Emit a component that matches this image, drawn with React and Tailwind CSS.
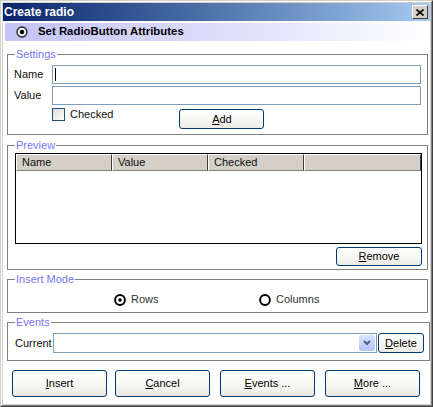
import React from "react";

const Btn = ({ children, className = "" }) => (
  <button
    className={
      "flex items-center justify-center rounded-[3px] border border-[#003c74] bg-linear-to-b from-white via-[#f8f8f5] to-[#ebeae3] text-[11px] text-black " +
      className
    }
  >
    {children}
  </button>
);

const Acc = ({ k, rest }) => (
  <span>
    <span className="underline">{k}</span>
    {rest}
  </span>
);

const Radio = ({ checked }) => (
  <svg width="12" height="12" viewBox="0 0 12 12" className="shrink-0">
    <circle cx="6" cy="6" r="4.9" fill="white" stroke="black" strokeWidth="2" />
    {checked && <circle cx="6" cy="6" r="1.8" fill="black" />}
  </svg>
);

const Group = ({ title, className = "", children }) => (
  <fieldset
    className={
      "ml-[4px] w-[421px] border border-[#808080] pl-[7px] pr-[5px] " + className
    }
  >
    <legend className="px-[1px] text-[11px] leading-[13px] text-[#7878f4]">
      {title}
    </legend>
    {children}
  </fieldset>
);

const App = () => {
  return (
    <div className="h-[407px] w-[433px] overflow-hidden border border-t-[#d4d0c8] border-l-[#d4d0c8] border-r-[#404040] border-b-[#404040] bg-[#d4d0c8] font-['Liberation_Sans',Arial,sans-serif] text-[11px] text-[#111]">
      <div className="flex h-full flex-col border border-t-white border-l-white border-r-[#808080] border-b-[#808080] p-[1px]">
        {/* title bar */}
        <div className="flex h-[18px] shrink-0 items-center justify-between bg-linear-to-r from-[#0a246a] to-[#a6caf0] pl-[1px] pr-[2px]">
          <span className="text-[12px] font-bold text-white">Create radio</span>
          <div className="flex h-[14px] w-[16px] items-center justify-center border border-t-white border-l-white border-r-[#404040] border-b-[#404040] bg-[#d4d0c8]">
            <svg width="8" height="7" viewBox="0 0 8 7">
              <path d="M0.5 0.5 L7.5 6.5 M7.5 0.5 L0.5 6.5" stroke="black" strokeWidth="1.6" />
            </svg>
          </div>
        </div>

        {/* body */}
        <div className="flex flex-1 flex-col bg-white">
          <div className="ml-[2px] mt-[2px] flex h-[18px] w-[423px] items-center bg-linear-to-r from-[#c4c4f6] via-[#dcdcfa] to-white">
            <div className="ml-[11px]">
              <svg width="12" height="12" viewBox="0 0 12 12">
                <circle cx="6" cy="6" r="5" fill="#f4f4f4" stroke="#222" strokeWidth="1.3" />
                <circle cx="6" cy="6" r="2.2" fill="black" />
              </svg>
            </div>
            <span className="ml-[10px] text-[11.4px] font-bold text-black">Set RadioButton Attributes</span>
          </div>

          {/* Settings */}
          <Group title="Settings" className="mt-[7px] pb-[5px]">
            <div className="mt-[4px] flex h-[19px] items-center">
              <span className="w-[38px] -ml-[1px] pr-[1px]">Name</span>
              <div className="flex h-[19px] w-[369px] items-center border border-[#7f9db9] pl-[2px]">
                <div className="h-[13px] w-[1px] bg-black" />
              </div>
            </div>
            <div className="mt-[2px] flex h-[19px] items-center">
              <span className="w-[38px] -ml-[1px] pr-[1px]">Value</span>
              <div className="h-[19px] w-[369px] border border-[#7f9db9]" />
            </div>
            <div className="mt-[3px] flex h-[21px] items-start">
              <div className="ml-[37px] h-[13px] w-[13px] border border-[#1c5180] bg-linear-to-br from-[#dcdcd7] to-white" />
              <span className="ml-[5px] leading-[13px]">Checked</span>
              <Btn className="ml-[66px] mt-[1px] h-[20px] w-[85px]">
                <Acc k="A" rest="dd" />
              </Btn>
            </div>
          </Group>

          {/* Preview */}
          <Group title="Preview" className="mt-[4px] pb-[3px]">
            <div className="mt-[1px] flex h-[91px] w-[407px] flex-col border border-black bg-white">
              <div className="flex h-[17px]">
                {["Name", "Value", "Checked"].map((h) => (
                  <div
                    key={h}
                    className="flex w-[96px] items-center border border-t-white border-l-white border-r-[#404040] border-b-[#808080] bg-[#d4d0c8] pl-[5px]"
                  >
                    {h}
                  </div>
                ))}
                <div className="flex-1 border border-t-white border-l-white border-r-[#404040] border-b-[#808080] bg-[#d4d0c8]" />
              </div>
            </div>
            <div className="mt-[3px] flex justify-end">
              <Btn className="h-[19px] w-[86px]">
                <Acc k="R" rest="emove" />
              </Btn>
            </div>
          </Group>

          {/* Insert Mode */}
          <Group title="Insert Mode" className="mt-[3px] pb-[6px]">
            <div className="mt-[7px] flex h-[13px] items-center">
              <div className="ml-[99px] flex w-[145px] items-center">
                <Radio checked />
                <span className="ml-[5px] text-[#333]">Rows</span>
              </div>
              <div className="flex items-center">
                <Radio />
                <span className="ml-[5px] text-[#333]">Columns</span>
              </div>
            </div>
          </Group>

          {/* Events */}
          <Group title="Events" className="mt-[3px] pb-[7px]">
            <div className="mt-[4px] flex h-[20px] items-center">
              <span className="w-[38px]">Current</span>
              <div className="flex h-[20px] w-[324px] items-center justify-end border border-[#7f9db9] pr-[1px]">
                <div className="flex h-[16px] w-[16px] items-center justify-center rounded-[2px] bg-linear-to-b from-[#d6e2fd] to-[#b2c6f6]">
                  <svg width="8" height="6" viewBox="0 0 8 6">
                    <path d="M1 1 L4 4 L7 1" fill="none" stroke="#4d6185" strokeWidth="2" />
                  </svg>
                </div>
              </div>
              <Btn className="ml-[1px] h-[20px] w-[46px] shrink-0">
                <Acc k="D" rest="elete" />
              </Btn>
            </div>
          </Group>

          {/* bottom buttons */}
          <div className="mt-[9px] flex h-[27px]">
            <Btn className="ml-[9px] h-[27px] w-[95px]">
              <Acc k="I" rest="nsert" />
            </Btn>
            <Btn className="ml-[8px] h-[27px] w-[95px]">
              <Acc k="C" rest="ancel" />
            </Btn>
            <Btn className="ml-[10px] h-[27px] w-[95px]">
              <Acc k="E" rest="vents ..." />
            </Btn>
            <Btn className="ml-[10px] h-[27px] w-[95px]">
              <Acc k="M" rest="ore ..." />
            </Btn>
          </div>
        </div>
      </div>
    </div>
  );
};

export default App;
